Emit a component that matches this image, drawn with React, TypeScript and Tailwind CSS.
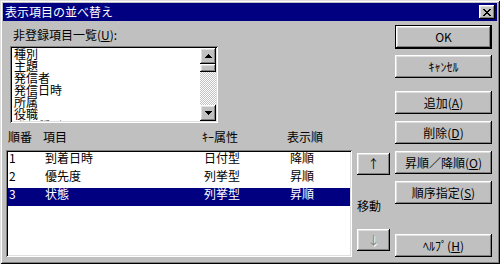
import React from "react";

const raised =
  "bg-[#c0c0c0] shadow-[inset_-1px_-1px_0_#000,inset_1px_1px_0_#fff,inset_-2px_-2px_0_#808080,inset_2px_2px_0_#dfdfdf]";

function Btn({ children, className = "" }: { children: React.ReactNode; className?: string }) {
  return (
    <div className={`${raised} w-[97px] h-[23px] flex items-center justify-center leading-[12px] ${className}`}>
      {children}
    </div>
  );
}

function U({ children }: { children: React.ReactNode }) {
  return <span className="underline underline-offset-[1px]">{children}</span>;
}

const items = ["種別", "主題", "発信者", "発信日時", "所属", "役職", "発信種別"];

const rows = [
  { n: "1", name: "到着日時", key: "日付型", order: "降順" },
  { n: "2", name: "優先度", key: "列挙型", order: "昇順" },
  { n: "3", name: "状態", key: "列挙型", order: "昇順" },
];

export default function App() {
  return (
    <div className="w-[500px] h-[264px] bg-[#c0c0c0] p-[3px] flex flex-col overflow-hidden font-['Noto_Sans_CJK_JP',sans-serif] text-[12px] leading-[12px] text-black shadow-[inset_1px_1px_0_#dfdfdf,inset_-1px_-1px_0_#000,inset_2px_2px_0_#fff,inset_-2px_-2px_0_#808080]">
      {/* Title bar */}
      <div className="h-[18px] bg-[#000080] flex items-center justify-between pl-[2px] pr-[2px]">
        <span className="text-white leading-[12px]">表示項目の並べ替え</span>
        <div className={`${raised} w-[16px] h-[14px] flex items-center justify-center`}>
          <svg width="8" height="7" viewBox="0 0 8 7" shapeRendering="crispEdges">
            <path d="M0 0h2v1h1v1h2v-1h1v-1h2v1h-1v1h-1v1h-1v1h1v1h1v1h1v1h-2v-1h-1v-1h-2v1h-1v1h-2v-1h1v-1h1v-1h1v-1h-1v-1h-1z" fill="#000" />
          </svg>
        </div>
      </div>

      {/* Body */}
      <div className="flex flex-1">
        {/* Left section */}
        <div className="w-[387px] pl-[3px] flex flex-col">
          <div className="ml-[7px] mt-[7px] h-[14px] leading-[14px]">
            非登録項目一覧(<U>U</U>):
          </div>

          {/* Upper listbox */}
          <div className="ml-[4px] mt-[4px] w-[208px] h-[77px] p-[2px] bg-white flex shadow-[inset_1px_1px_0_#808080,inset_-1px_-1px_0_#fff,inset_2px_2px_0_#000,inset_-2px_-2px_0_#dfdfdf]">
            <div className="flex-1 overflow-hidden pl-[2px] flex flex-col">
              {items.map((t) => (
                <div key={t} className="h-[12px] leading-[12px] shrink-0 whitespace-nowrap">
                  {t}
                </div>
              ))}
            </div>
            <div className="w-[16px] flex flex-col">
              <div className={`${raised} h-[16px] flex items-center justify-center`}>
                <svg width="7" height="4" viewBox="0 0 7 4" shapeRendering="crispEdges">
                  <path d="M3 0h1v1h1v1h1v1h1v1h-7v-1h1v-1h1v-1h1z" fill="#000" />
                </svg>
              </div>
              <div className={`${raised} h-[8px]`} />
              <div className="flex-1 bg-[image:repeating-conic-gradient(#c0c0c0_0%_25%,#ffffff_0%_50%)] bg-[length:2px_2px]" />
              <div className={`${raised} h-[16px] flex items-center justify-center`}>
                <svg width="7" height="4" viewBox="0 0 7 4" shapeRendering="crispEdges">
                  <path d="M0 0h7v1h-1v1h-1v1h-1v1h-1v-1h-1v-1h-1v-1h-1z" fill="#000" />
                </svg>
              </div>
            </div>
          </div>

          {/* Header */}
          <div className="mt-[7px] h-[14px] leading-[14px] grid grid-cols-[35px_159px_85px_1fr] pl-[2px]">
            <span>順番</span>
            <span>項目</span>
            <span>ｷｰ属性</span>
            <span>表示順</span>
          </div>

          {/* Lower list + move buttons */}
          <div className="mt-[6px] flex">
            <div className="w-[346px] h-[107px] p-[2px] bg-white flex flex-col shadow-[inset_1px_1px_0_#808080,inset_-1px_-1px_0_#fff,inset_2px_2px_0_#000,inset_-2px_-2px_0_#dfdfdf]">
              {rows.map((r, i) => (
                <div
                  key={r.n}
                  className={`h-[18px] leading-[12px] grid grid-cols-[36px_159px_86px_1fr] pl-[1px] ${
                    i === 2 ? "bg-[#000080] text-white" : ""
                  }`}
                >
                  <span>{r.n}</span>
                  <span>{r.name}</span>
                  <span>{r.key}</span>
                  <span>{r.order}</span>
                </div>
              ))}
            </div>
            <div className="ml-[5px] w-[33px] flex flex-col">
              <div className={`${raised} mt-[3px] h-[22px] flex items-center justify-center`}>
                <span className="leading-[12px]">↑</span>
              </div>
              <div className="mt-[24px] h-[14px] leading-[14px] whitespace-nowrap">移動</div>
              <div className={`${raised} mt-[16px] h-[22px] flex items-center justify-center`}>
                <span className="leading-[12px] text-[#808080] [text-shadow:1px_1px_0_#fff]">↓</span>
              </div>
            </div>
          </div>
        </div>

        {/* Right buttons */}
        <div className="ml-[5px] w-[97px] flex flex-col pt-[4px]">
          <div className="w-[97px] h-[24px] border border-black">
            <div className={`${raised} w-full h-full flex items-center justify-center leading-[12px]`}>OK</div>
          </div>
          <Btn className="mt-[6px]">ｷｬﾝｾﾙ</Btn>
          <Btn className="mt-[13px]">
            追加(<U>A</U>)
          </Btn>
          <Btn className="mt-[7px]">
            削除(<U>D</U>)
          </Btn>
          <Btn className="mt-[7px]">
            昇順／降順(<U>O</U>)
          </Btn>
          <Btn className="mt-[7px]">
            順序指定(<U>S</U>)
          </Btn>
          <Btn className="mt-[30px]">
            ﾍﾙﾌﾟ(<U>H</U>)
          </Btn>
        </div>
      </div>
    </div>
  );
}
